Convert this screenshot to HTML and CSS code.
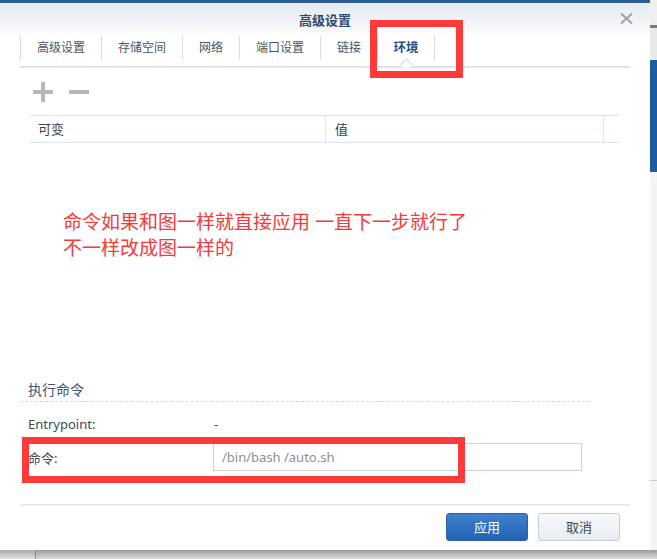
FILE: index.html
```html
<!DOCTYPE html>
<html lang="zh-CN">
<head>
<meta charset="utf-8">
<title>高级设置</title>
<link rel="stylesheet" href="styles.css">
</head>
<body>
<div class="screen">
  <div class="dialog">
    <div class="topbar"></div>
    <div class="header">
      <span></span>
      <span class="title">高级设置</span>
      <span class="close">
        <svg width="13" height="11" viewBox="0 0 13 11"><path d="M1 0.5 L12 10.5 M12 0.5 L1 10.5" stroke="#9ba1a8" stroke-width="2" fill="none"/></svg>
      </span>
    </div>
    <div class="tabs">
      <div class="tab">高级设置</div>
      <div class="tab">存储空间</div>
      <div class="tab">网络</div>
      <div class="tab">端口设置</div>
      <div class="tab">链接</div>
      <div class="tab active">环境<span class="notch"></span></div>
      <div class="tab-end"></div>
    </div>
    <div class="tabline"></div>
    <div class="toolbar">
      <svg width="20" height="20" viewBox="0 0 20 20"><rect x="0" y="8" width="20" height="4" fill="#b4b7bb"/><rect x="8" y="0" width="4" height="20" fill="#b4b7bb"/></svg>
      <svg width="20" height="20" viewBox="0 0 20 20"><rect x="0" y="8" width="20" height="4" fill="#b4b7bb"/></svg>
    </div>
    <div class="grid-head">
      <div class="col col-a">可变</div>
      <div class="col col-b">值</div>
      <div class="col col-c"></div>
    </div>
    <div class="note">
      <div>命令如果和图一样就直接应用 一直下一步就行了</div>
      <div>不一样改成图一样的</div>
    </div>
    <div class="section-title"><span>执行命令</span></div>
    <div class="row row-entry">
      <span class="label">Entrypoint:</span>
      <span class="value">-</span>
    </div>
    <div class="row row-cmd">
      <span class="label">命令:</span>
      <span class="input">/bin/bash /auto.sh</span>
    </div>
    <div class="footline"></div>
    <div class="buttons">
      <span class="btn btn-apply">应用</span>
      <span class="btn btn-cancel">取消</span>
    </div>
    <div class="mark mark-tab"></div>
    <div class="mark mark-cmd"></div>
  </div>
  <div class="side">
    <div class="s1"></div>
    <div class="s2"></div>
    <div class="s3"></div>
    <div class="s4"></div>
    <div class="s5"></div>
    <div class="s6"></div>
  </div>
</div>
<div class="under">
  <div class="under-left"></div>
  <div class="under-right"></div>
</div>
</body>
</html>
```

FILE: styles.css
```css
html, body {
  margin: 0;
  padding: 0;
}
body {
  width: 657px;
  height: 559px;
  overflow: hidden;
  background: #d6d6d6;
  font-family: "Noto Sans", "Noto Sans CJK SC", sans-serif;
  color: #3d4650;
}
.screen {
  display: flex;
  height: 550px;
}
.dialog {
  position: relative;
  width: 650px;
  height: 550px;
  background: #ffffff;
  display: flex;
  flex-direction: column;
}
.topbar {
  height: 3px;
  background: #2d5b8f;
}
.header {
  height: 33px;
  display: grid;
  grid-template-columns: 1fr auto 1fr;
  align-items: start;
  background: linear-gradient(#e4eaf3, #f7f9fc 80%, #ffffff);
}
.title {
  margin-top: 8px;
  line-height: 18px;
  font-size: 13px;
  font-weight: bold;
  color: #2b4a70;
}
.close {
  justify-self: end;
  margin-right: 17px;
  margin-top: 10px;
  height: 11px;
}
.close svg {
  display: block;
}
.tabs {
  display: flex;
  height: 24px;
  margin-left: 20px;
}
.tab {
  position: relative;
  border-left: 1px solid #d5dde8;
  padding: 0 16px;
  font-size: 12px;
  line-height: 24px;
  color: #4c5560;
}
.tab.active {
  font-size: 12.5px;
  font-weight: bold;
  color: #264f86;
  padding: 0 15.5px;
}
.tab-end {
  border-left: 1px solid #d5dde8;
}
.notch {
  position: absolute;
  left: 50%;
  bottom: -9px;
  width: 8px;
  height: 8px;
  margin-left: -4px;
  background: #ffffff;
  border-left: 1px solid #cfd3d8;
  border-top: 1px solid #cfd3d8;
  transform: rotate(45deg);
}
.tabline {
  margin: 6px 20px 0 20px;
  height: 2px;
  background: linear-gradient(#d6d9dd, #eceef0);
}
.toolbar {
  display: flex;
  gap: 16px;
  margin-top: 14px;
  padding-left: 33px;
  height: 20px;
}
.toolbar svg {
  display: block;
}
.grid-head {
  display: flex;
  margin-top: 13px;
  margin-left: 30px;
  width: 590px;
  height: 26px;
  border-top: 1px solid #dde4ec;
  border-bottom: 1px solid #dde4ec;
}
.col {
  font-size: 13px;
  line-height: 26px;
  color: #36404b;
}
.col-a {
  width: 287px;
  padding-left: 8px;
}
.col-b {
  width: 268px;
  padding-left: 9px;
  border-left: 1px solid #dde4ec;
}
.col-c {
  flex: 1;
  border-left: 1px solid #dde4ec;
}
.note {
  margin-top: 66px;
  padding-left: 63px;
  font-size: 19px;
  line-height: 26px;
  color: #f53a3a;
}
.section-title {
  margin: 119px 0 0 20px;
  width: 570px;
  height: 22px;
  border-bottom: 1px dashed #d3d8de;
  box-sizing: border-box;
}
.section-title span {
  display: block;
  padding-left: 8px;
  font-size: 14px;
  line-height: 20px;
  color: #3e5470;
}
.row {
  display: flex;
  align-items: center;
  padding-left: 28px;
}
.row-entry {
  margin-top: 10px;
  height: 24px;
}
.row-cmd {
  margin-top: 7px;
  height: 28px;
}
.label {
  width: 185px;
  font-size: 13px;
  color: #404a55;
}
.value {
  padding-left: 1px;
  font-size: 13px;
  color: #404a55;
}
.input {
  width: 351px;
  height: 26px;
  line-height: 26px;
  padding-left: 8px;
  padding-right: 8px;
  border: 1px solid #c9d2dc;
  font-size: 13px;
  color: #8a9098;
}
.footline {
  margin: 33px 20px 0 20px;
  height: 2px;
  background: linear-gradient(#e3e5e8, #eff0f2);
}
.buttons {
  display: flex;
  justify-content: flex-end;
  gap: 10px;
  margin-top: 7px;
  padding-right: 30px;
}
.btn {
  width: 80px;
  height: 26px;
  line-height: 26px;
  text-align: center;
  font-size: 13px;
  border-radius: 3px;
}
.btn-apply {
  color: #ffffff;
  background: linear-gradient(#3f82d0, #2462b1);
  border: 1px solid #2a61a6;
}
.btn-cancel {
  color: #3c4550;
  background: linear-gradient(#f8fafc, #e7ecf2);
  border: 1px solid #c5ced8;
}
.mark {
  position: absolute;
  border: 7px solid #ff3a3a;
  box-sizing: border-box;
}
.mark-tab {
  left: 370px;
  top: 20px;
  width: 93px;
  height: 58px;
}
.mark-cmd {
  left: 22px;
  top: 437px;
  width: 443px;
  height: 46px;
}
.side {
  width: 7px;
  display: flex;
  flex-direction: column;
  box-shadow: inset 3px 0 3px -1px rgba(0, 0, 0, 0.25);
}
.s1 { height: 25px; background: #efefef; }
.s2 { height: 3px; background: #7b7b7b; }
.s3 { height: 32px; background: #e7e8ea; }
.s4 { height: 112px; background: #1f5c9e; }
.s5 { height: 308px; background: #f4f4f4; }
.s6 { flex: 1; background: #f4f4f4; border-top: 1px solid #cccccc; }
.under {
  display: flex;
  height: 9px;
}
.under-left {
  width: 35px;
  border-right: 1px solid #8e8e8e;
  background: linear-gradient(#a8a8a8, #e2e2e2);
}
.under-right {
  flex: 1;
  background: linear-gradient(#9c9c9c, #dadada);
}
```
